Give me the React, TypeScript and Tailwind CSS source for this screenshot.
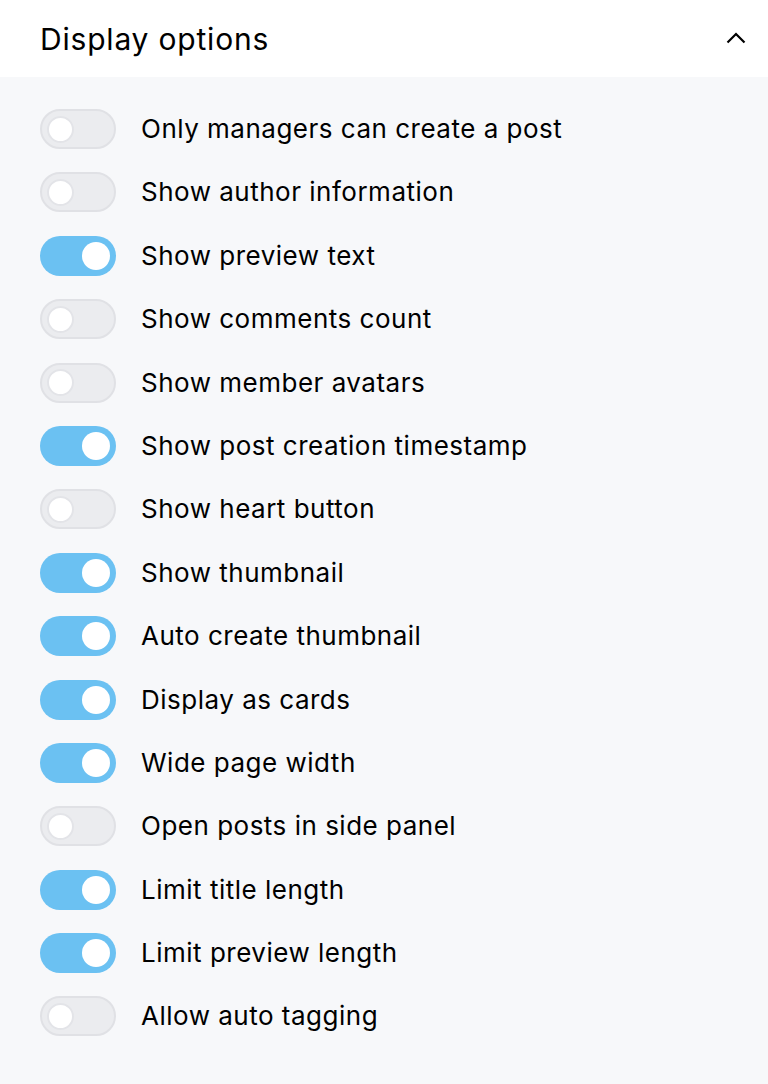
import React from "react";

const items: [string, boolean][] = [
  ["Only managers can create a post", false],
  ["Show author information", false],
  ["Show preview text", true],
  ["Show comments count", false],
  ["Show member avatars", false],
  ["Show post creation timestamp", true],
  ["Show heart button", false],
  ["Show thumbnail", true],
  ["Auto create thumbnail", true],
  ["Display as cards", true],
  ["Wide page width", true],
  ["Open posts in side panel", false],
  ["Limit title length", true],
  ["Limit preview length", true],
  ["Allow auto tagging", false],
];

function Toggle({ on }: { on: boolean }) {
  if (on) {
    return (
      <div className="w-[76px] h-10 rounded-full bg-[#6bc1f2] flex items-center justify-end pr-[6px] shrink-0">
        <div className="w-7 h-7 rounded-full bg-white" />
      </div>
    );
  }
  return (
    <div className="w-[76px] h-10 rounded-full bg-[#ebecef] border-2 border-[#e0e1e5] flex items-center pl-[5px] shrink-0">
      <div className="w-[27px] h-[27px] rounded-full bg-white border-2 border-[#e3e4e8]" />
    </div>
  );
}

export default function App() {
  return (
    <div className="w-[768px] h-[1084px] bg-[#f7f8fa] text-black" style={{ fontFamily: "Inter, 'Noto Sans', sans-serif" }}>
      <div className="h-[77px] bg-white flex items-center justify-between pl-10 pr-[22px]">
        <div className="text-[30px] tracking-[0.8px] leading-none">Display options</div>
        <svg width="20" height="12" viewBox="0 0 20 12" fill="none" stroke="black" strokeWidth="2.2" className="mt-[-2px]">
          <path d="M1.5 10.5 L10 2 L18.5 10.5" />
        </svg>
      </div>
      <div className="pt-[32px] pl-10 flex flex-col gap-[23.4px]">
        {items.map(([label, on]) => (
          <div key={label} className="flex items-center gap-[25px] h-10">
            <Toggle on={on} />
            <span className="text-[26px] leading-none tracking-[0.5px]">{label}</span>
          </div>
        ))}
      </div>
    </div>
  );
}
